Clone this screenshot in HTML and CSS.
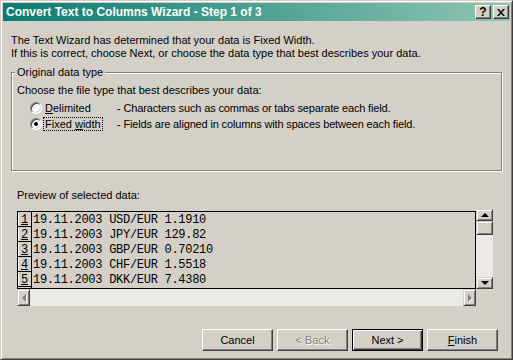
FILE: index.html
```html
<!DOCTYPE html>
<html lang="en">
<head>
  <meta charset="UTF-8">
  <title>Convert Text to Columns Wizard - Step 1 of 3</title>
  <link rel="stylesheet" href="styles.css">
</head>
<body>
  <div class="window">
    <div class="titlebar">
      <span class="title">Convert Text to Columns Wizard - Step 1 of 3</span>
      <span class="cap-btn help">?</span>
      <span class="cap-btn">
        <svg width="8" height="7" viewBox="0 0 8 7">
          <path d="M0 0h2l2 2.5L6 0h2L5 3.5 8 7H6L4 4.5 2 7H0l3-3.5z" fill="#000"/>
        </svg>
      </span>
    </div>

    <div class="content">
      <p class="intro">The Text Wizard has determined that your data is Fixed Width.<br>
      If this is correct, choose Next, or choose the data type that best describes your data.</p>

      <fieldset class="group">
        <legend>Original data type</legend>
        <p class="choose">Choose the file type that best describes your data:</p>
        <div class="options">
          <div class="option">
            <span class="radio"></span>
            <span class="opt-label"><u>D</u>elimited</span>
            <span class="opt-desc">- Characters such as commas or tabs separate each field.</span>
          </div>
          <div class="option">
            <span class="radio checked"></span>
            <span class="opt-label"><span class="focus">Fixed <u>w</u>idth</span></span>
            <span class="opt-desc">- Fields are aligned in columns with spaces between each field.</span>
          </div>
        </div>
      </fieldset>

      <p class="preview-label">Preview of selected data:</p>

      <div class="preview">
        <div class="preview-area">
          <div class="row"><span class="num">1</span><span class="data">19.11.2003 USD/EUR 1.1910</span></div>
          <div class="row"><span class="num">2</span><span class="data">19.11.2003 JPY/EUR 129.82</span></div>
          <div class="row"><span class="num">3</span><span class="data">19.11.2003 GBP/EUR 0.70210</span></div>
          <div class="row"><span class="num">4</span><span class="data">19.11.2003 CHF/EUR 1.5518</span></div>
          <div class="row"><span class="num">5</span><span class="data">19.11.2003 DKK/EUR 7.4380</span></div>
          <div class="row"><span class="num"></span></div>
        </div>
        <div class="vscroll">
          <span class="sb-btn"><span class="arrow up"></span></span>
          <span class="sb-btn thumb"></span>
          <span class="track"></span>
          <span class="sb-btn"><span class="arrow down"></span></span>
        </div>
        <div class="hscroll">
          <span class="sb-btn side"><span class="arrow left"></span></span>
          <span class="track"></span>
          <span class="sb-btn side"><span class="arrow right"></span></span>
        </div>
        <div class="corner"></div>
      </div>

      <div class="buttons">
        <button class="btn">Cancel</button>
        <button class="btn disabled">&lt; Back</button>
        <button class="btn default">Next &gt;</button>
        <button class="btn"><u>F</u>inish</button>
      </div>
    </div>
  </div>
</body>
</html>
```

FILE: styles.css
```css
body {
  margin: 0;
  background: #d4d0c8;
  font-family: "Liberation Sans", Arial, sans-serif;
  font-size: 11px;
  color: #000;
}

p {
  margin: 0;
  line-height: 13px;
}

.window {
  width: 513px;
  height: 360px;
  box-sizing: border-box;
  border: 1px solid;
  border-color: #d4d0c8 #404040 #404040 #d4d0c8;
  box-shadow: inset 1px 1px #fff, inset -1px -1px #808080;
  padding: 2px;
  display: flex;
  flex-direction: column;
}

.titlebar {
  height: 18px;
  display: flex;
  align-items: center;
  padding: 0 1px 0 3px;
  background: linear-gradient(to right, #0a7b74, #8fc6b2);
  color: #fff;
  font-weight: bold;
  font-size: 12px;
}

.title {
  flex: 1;
}

.cap-btn {
  width: 16px;
  height: 14px;
  box-sizing: border-box;
  border: 1px solid;
  border-color: #fff #404040 #404040 #fff;
  box-shadow: inset -1px -1px #808080;
  background: #d4d0c8;
  color: #000;
  display: flex;
  align-items: center;
  justify-content: center;
}

.help {
  margin-right: 2px;
  font-size: 12px;
}

.content {
  flex: 1;
  padding: 0 12px 0 8px;
  display: flex;
  flex-direction: column;
}

.intro {
  margin-top: 13px;
}

/* etched group box */
.group {
  margin: 6px 0 0;
  width: 491px;
  height: 105px;
  box-sizing: border-box;
  border: 1px solid #808080;
  box-shadow: inset 1px 1px #fff, 1px 1px #fff;
  padding: 0 5px;
}

.group legend {
  padding: 0 2px;
  margin-left: -2px;
  line-height: 13px;
  background: #d4d0c8;
}

.choose {
  margin-top: 5px;
}

.options {
  margin-top: 3px;
}

.option {
  display: flex;
  align-items: center;
  height: 16px;
  line-height: 13px;
}

.radio {
  width: 12px;
  height: 12px;
  box-sizing: border-box;
  margin-left: 13px;
  border-radius: 50%;
  background: #fff;
  border: 1px solid;
  border-color: #808080 #fff #fff #808080;
  box-shadow: inset 1px 1px #404040, inset -1px -1px #d4d0c8;
  display: flex;
  align-items: center;
  justify-content: center;
}

.radio.checked::after {
  content: "";
  width: 4px;
  height: 4px;
  border-radius: 50%;
  background: #000;
}

.opt-label {
  width: 72px;
  margin-left: 3px;
}

.opt-desc {
  letter-spacing: -0.15px;
}

.focus {
  margin-left: -2px;
  padding: 0 1px;
  border: 1px dotted #000;
}

.preview-label {
  margin: 18px 0 0 6px;
}

.preview {
  display: grid;
  grid-template-columns: 459px 17px;
  grid-template-rows: 80px 17px;
  margin: 7px 0 0 6px;
}

.preview-area {
  margin-top: 2px;
  border: 1px solid #000;
  overflow: hidden;
  font-family: "Liberation Mono", "Courier New", monospace;
  font-size: 12px;
  letter-spacing: -0.28px;
}

.row {
  display: flex;
  height: 15px;
}

.num,
.data {
  line-height: 13px;
  padding-top: 2px;
}

.num {
  width: 14px;
  box-sizing: border-box;
  border-right: 1px solid #000;
  border-bottom: 1px solid #000;
  box-shadow: inset 1px 0 #fff;
  text-align: center;
  text-decoration: underline;
}

.data {
  padding-left: 1px;
}

.vscroll {
  display: flex;
  flex-direction: column;
}

.hscroll {
  display: flex;
}

.track {
  flex: 1;
  background: #ebe9e5;
}

.corner {
  background: #d4d0c8;
}

.sb-btn {
  height: 12px;
  box-sizing: border-box;
  border: 1px solid;
  border-color: #d4d0c8 #404040 #404040 #d4d0c8;
  box-shadow: inset 1px 1px #fff, inset -1px -1px #808080;
  background: #d4d0c8;
  display: flex;
  align-items: center;
  justify-content: center;
}

.sb-btn.thumb {
  height: 14px;
}

.sb-btn.side {
  width: 13px;
  height: 17px;
}

.arrow {
  width: 0;
  height: 0;
}

.arrow.up {
  border-left: 4px solid transparent;
  border-right: 4px solid transparent;
  border-bottom: 4px solid #000;
}

.arrow.down {
  border-left: 4px solid transparent;
  border-right: 4px solid transparent;
  border-top: 4px solid #000;
}

.arrow.left {
  border-top: 4px solid transparent;
  border-bottom: 4px solid transparent;
  border-right: 4px solid #808080;
  filter: drop-shadow(1px 1px 0 #fff);
}

.arrow.right {
  border-top: 4px solid transparent;
  border-bottom: 4px solid transparent;
  border-left: 4px solid #808080;
  filter: drop-shadow(1px 1px 0 #fff);
}

.buttons {
  display: flex;
  justify-content: flex-end;
  gap: 4px;
  margin-top: 23px;
}

.btn {
  width: 71px;
  height: 22px;
  padding: 0;
  box-sizing: border-box;
  font: inherit;
  color: #000;
  background: #d4d0c8;
  border: 1px solid;
  border-color: #fff #404040 #404040 #fff;
  box-shadow: inset -1px -1px #808080;
}

.btn.default {
  border-color: #000;
  box-shadow: inset 1px 1px #fff, inset -1px -1px #404040, inset -2px -2px #808080;
}

.btn.disabled {
  color: #808080;
  text-shadow: 1px 1px #fff;
}
```
